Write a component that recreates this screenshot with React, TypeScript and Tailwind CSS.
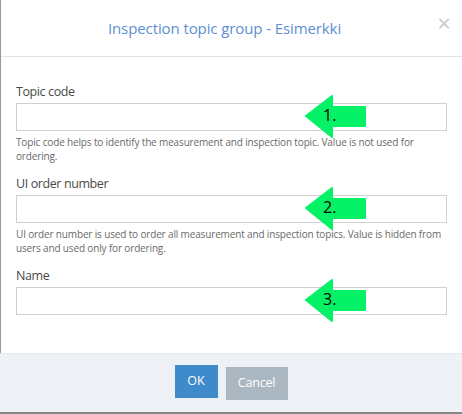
import React from "react";

function Arrow({ n }: { n: string }) {
  return (
    <div className="absolute left-[289px] top-[-8px] w-[62px] h-[43px] pointer-events-none">
      <svg width="62" height="43" viewBox="0 0 62 43" className="absolute inset-0">
        <polygon
          points="1,21 27,1 27,12 60,12 60,31 27,31 27,42"
          fill="#05f266"
          stroke="#05f266"
          strokeWidth="2"
          strokeLinejoin="round"
        />
      </svg>
      <span className="absolute left-[18px] top-[10px] text-[16px] leading-[20px] text-black">{n}</span>
    </div>
  );
}

function Field({ label, help, n }: { label: string; help?: string; n: string }) {
  return (
    <div>
      <label className="block text-[12.5px] tracking-[-0.4px] leading-[18px] text-[#4a4a4a] mb-[2px]">{label}</label>
      <div className="relative">
        <input className="block w-full h-[28px] border border-[#d0d0d0] bg-white outline-none" />
        <Arrow n={n} />
      </div>
      {help && (
        <p className="mt-[4px] text-[10px] tracking-[-0.15px] leading-[14px] text-[#6a6a6a]">{help}</p>
      )}
    </div>
  );
}

export default function App() {
  return (
    <div
      className="w-[462px] h-[414px] bg-white flex flex-col overflow-hidden"
      style={{ fontFamily: '"Open Sans", "Liberation Sans", sans-serif' }}
    >
      <div className="flex-1 flex flex-col border-l border-[#9a9a9a]">
        <div className="relative h-[57px] border-b border-[#e3e3e3] flex items-center justify-center pr-[14px]">
          <h2 className="text-[15px] tracking-[-0.1px] text-[#5b8fd2] pt-[1px]">Inspection topic group - Esimerkki</h2>
          <span className="absolute right-[11px] top-[9px] text-[24px] leading-[28px] text-[#c8c8c8]">×</span>
        </div>
        <div className="flex-1 px-[15px] pt-[26px] flex flex-col gap-[12px]">
          <Field
            label="Topic code"
            n="1."
            help="Topic code helps to identify the measurement and inspection topic. Value is not used for ordering."
          />
          <Field
            label="UI order number"
            n="2."
            help="UI order number is used to order all measurement and inspection topics. Value is hidden from users and used only for ordering."
          />
          <Field label="Name" n="3." />
        </div>
      </div>
      <div className="h-[59px] bg-[#eef1f6] border-t border-[#e3e6ea] flex items-center justify-center gap-[8px]">
        <button className="w-[43px] h-[33px] bg-[#3f8acb] text-white text-[12.5px] mb-[3px]">OK</button>
        <button className="w-[62px] h-[33px] bg-[#abb7c1] text-white text-[12.5px] tracking-[-0.2px]">Cancel</button>
      </div>
      <div className="h-[2px] bg-[#858585]" />
    </div>
  );
}
